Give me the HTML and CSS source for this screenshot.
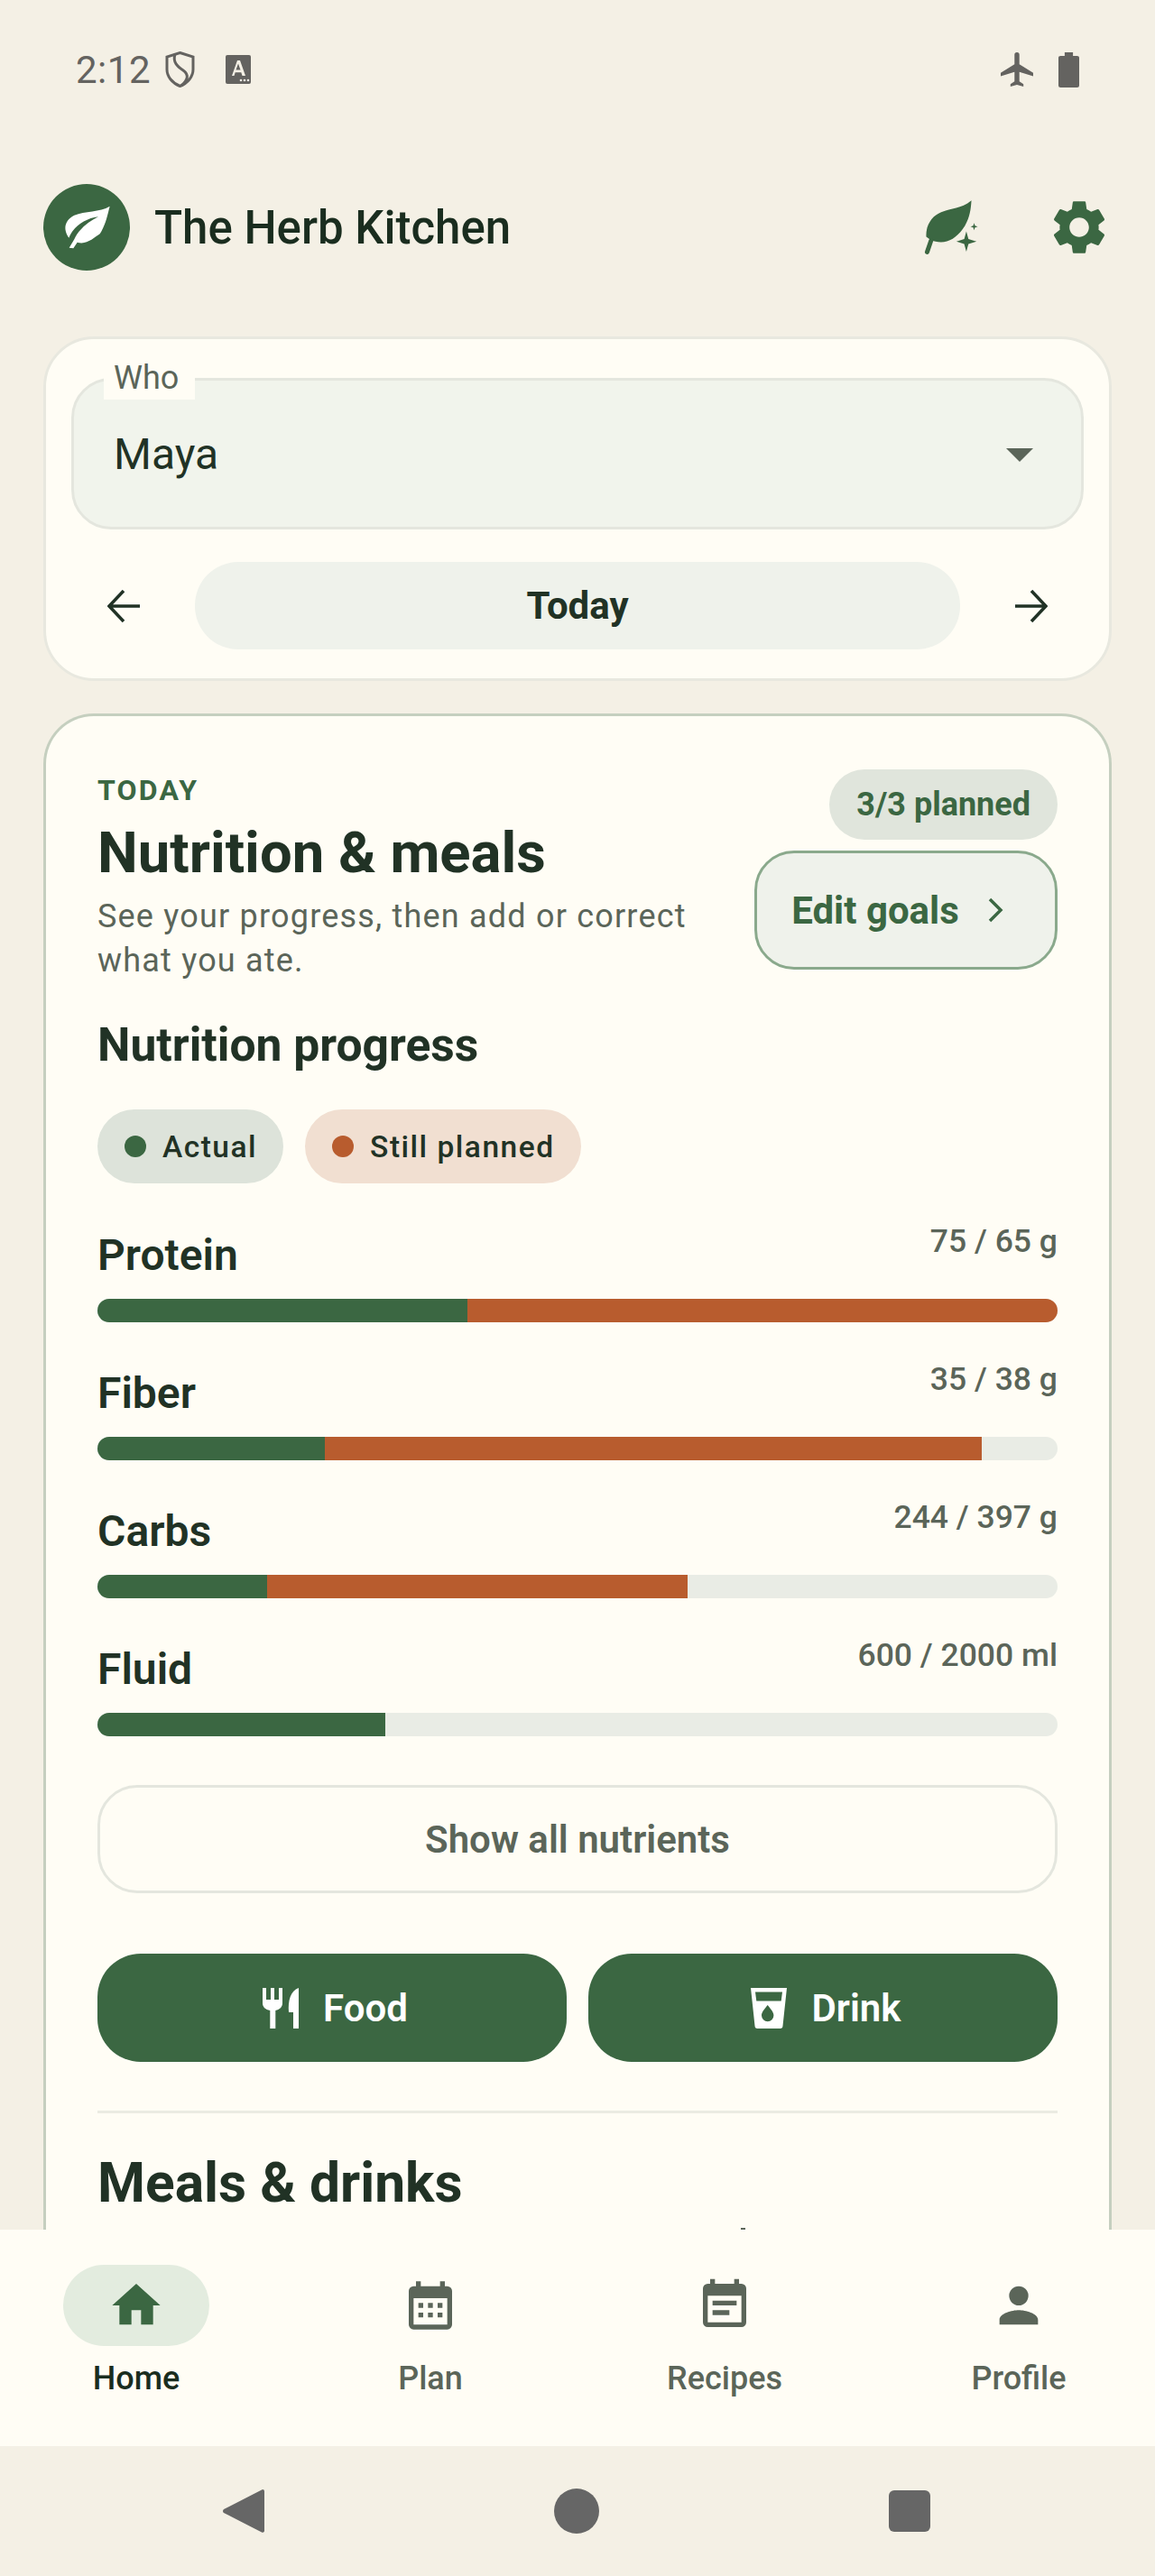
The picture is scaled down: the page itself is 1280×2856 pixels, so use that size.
FILE: index.html
```html
<!DOCTYPE html>
<html lang="en">
<head>
  <meta charset="UTF-8">
  <meta name="viewport" content="width=device-width, initial-scale=1.0">
  <title>The Herb Kitchen</title>
  <link rel="stylesheet" href="styles.css">
</head>
<body>
  <div class="screen">

    <!-- status bar -->
    <div class="status-bar">
      <div class="status-left">
        <span class="clock">2:12</span>
        <svg class="shield" viewBox="0 0 33 40" width="33" height="40"><path d="M16.500 1.500 31 6v14c0 8-6 15-14.500 18.500C8 35 2 28 2 20V6z" fill="none" stroke="#646360" stroke-width="3"/><path d="M11 3c-3 9 3 14 9 18 7 5 5 11-2 17" fill="none" stroke="#646360" stroke-width="3"/></svg>
        <svg class="keyboard" viewBox="0 0 28 32" width="28" height="32"><rect width="28" height="32" rx="2" fill="#646360"/><path d="M7 23l6-17h3l6 17h-3.500l-1.200-3.800h-6.600L9.500 23zM11.500 16.500h5L14 9.500z" fill="#f4f0e5"/><circle cx="17" cy="28" r="1.300" fill="#f4f0e5"/><circle cx="21" cy="28" r="1.300" fill="#f4f0e5"/><circle cx="25" cy="28" r="1.300" fill="#f4f0e5"/></svg>
      </div>
      <div class="status-right">
        <svg viewBox="2 2 20 20" width="36" height="38" preserveAspectRatio="none"><path d="M22 16v-2l-8.500-5V3.500a1.500 1.500 0 0 0-3 0V9L2 14v2l8.500-2.500V19l-2.500 1.500V22l4-1 4 1v-1.500L13.500 19v-5.500z" fill="#646360"/></svg>
        <svg viewBox="0 0 20 40" width="23" height="39" preserveAspectRatio="none"><path d="M6 0h8v4h4a2 2 0 0 1 2 2v32a2 2 0 0 1-2 2H2a2 2 0 0 1-2-2V6a2 2 0 0 1 2-2h4z" fill="#646360"/></svg>
      </div>
    </div>

    <!-- app bar -->
    <header class="app-bar">
      <div class="brand">
        <div class="logo">
          <svg viewBox="115 115 165 150" width="55" height="50"><path d="M273 120c-33 20-83 15-118 30-30 15-40 45-18 75 13-35 53-65 98-70-30 15-65 40-80 75l-17 28 14 2 13-20c30 10 55-15 75-28 20-32 25-62 33-92z" fill="#fff"/></svg>
        </div>
        <h1 class="brand-name">The Herb Kitchen</h1>
      </div>
      <div class="app-actions">
        <svg viewBox="70 60 180 190" width="60" height="63"><path d="M228 64c-2 30-5 55-22 85-25 40-60 62-98 52l-13-3-18-13c-2-40 20-70 50-82 35-14 65-10 101-39z" fill="#3b6742"/><path d="M93 198 80 236" stroke="#3b6742" stroke-width="15" stroke-linecap="round" fill="none"/><path d="M211 167l7 26 27 8-27 8-7 26-7-26-26-8 26-8zM237 139l3 9 9 3-9 3-3 9-3-9-9-3 9-3z" fill="#3b6742"/></svg>
        <svg viewBox="0 0 24 24" width="72" height="72"><path d="M19.140 12.940c.04-.3.060-.61.060-.94 0-.32-.020-.64-.070-.94l2.030-1.580c.18-.14.230-.41.120-.61l-1.920-3.320c-.12-.22-.37-.29-.59-.22l-2.390.96c-.5-.38-1.030-.7-1.620-.94l-.36-2.540c-.04-.24-.24-.41-.48-.41h-3.840c-.24 0-.43.170-.47.41l-.36 2.540c-.59.240-1.130.57-1.620.94l-2.390-.96c-.22-.08-.47 0-.59.220L2.740 8.870c-.12.210-.08.470.12.610l2.030 1.580c-.05.300-.09.630-.09.940s.020.640.070.940l-2.030 1.580c-.18.140-.23.410-.12.610l1.920 3.320c.12.220.37.290.59.220l2.390-.96c.5.380 1.030.7 1.620.94l.36 2.540c.05.240.24.410.48.410h3.840c.24 0 .44-.17.470-.41l.36-2.540c.59-.24 1.130-.56 1.620-.94l2.390.96c.22.080.47 0 .59-.22l1.920-3.320c.12-.22.070-.47-.12-.61zM12 15.600c-1.980 0-3.600-1.620-3.600-3.600s1.620-3.600 3.600-3.600 3.600 1.620 3.600 3.600-1.620 3.600-3.600 3.600z" fill="#3b6742"/></svg>
      </div>
    </header>

    <!-- who / day picker -->
    <section class="picker-card">
      <div class="who-field">
        <span class="who-label">Who</span>
        <span class="who-value">Maya</span>
        <span class="who-arrow"></span>
      </div>
      <div class="day-row">
        <svg viewBox="0 0 36 36" width="36" height="36"><path d="M36 18H4M18 1 2 18l16 17" fill="none" stroke="#213225" stroke-width="3.500"/></svg>
        <div class="day-pill">Today</div>
        <svg viewBox="0 0 36 36" width="36" height="36"><path d="M0 18h32M18 1l16 17-16 17" fill="none" stroke="#213225" stroke-width="3.500"/></svg>
      </div>
    </section>

    <!-- main card -->
    <section class="main-card">
      <div class="intro">
        <div class="intro-text">
          <div class="eyebrow">TODAY</div>
          <h2 class="title">Nutrition &amp; meals</h2>
          <p class="subtitle">See your progress, then add or correct what you ate.</p>
        </div>
        <div class="intro-side">
          <span class="planned-chip">3/3 planned</span>
          <button class="goals-btn">Edit goals
            <svg viewBox="0 0 17 28" width="17" height="28"><path d="M2 2l12 12L2 26" fill="none" stroke="#3b6742" stroke-width="3.500"/></svg>
          </button>
        </div>
      </div>

      <h3 class="section-title">Nutrition progress</h3>
      <div class="legend">
        <span class="legend-chip actual"><i class="dot dot-green"></i>Actual</span>
        <span class="legend-chip planned"><i class="dot dot-orange"></i>Still planned</span>
      </div>

      <div class="nutrient">
        <div class="nutrient-head"><span class="nutrient-name">Protein</span><span class="nutrient-val">75 / 65 g</span></div>
        <div class="bar"><div class="bar-a" style="width:38.5%"></div><div class="bar-b" style="width:61.5%"></div></div>
      </div>
      <div class="nutrient">
        <div class="nutrient-head"><span class="nutrient-name">Fiber</span><span class="nutrient-val">35 / 38 g</span></div>
        <div class="bar"><div class="bar-a" style="width:23.7%"></div><div class="bar-b" style="width:68.4%"></div></div>
      </div>
      <div class="nutrient">
        <div class="nutrient-head"><span class="nutrient-name">Carbs</span><span class="nutrient-val">244 / 397 g</span></div>
        <div class="bar"><div class="bar-a" style="width:17.7%"></div><div class="bar-b" style="width:43.8%"></div></div>
      </div>
      <div class="nutrient">
        <div class="nutrient-head"><span class="nutrient-name">Fluid</span><span class="nutrient-val">600 / 2000 ml</span></div>
        <div class="bar"><div class="bar-a" style="width:30%"></div></div>
      </div>

      <button class="show-all">Show all nutrients</button>

      <div class="add-row">
        <button class="add-btn">
          <svg viewBox="0 0 40 45" width="40" height="45"><path d="M0 0h4v13h5V0h4v13h5V0h4v17c0 4-3 7-7.700 8v20H8.300V25C3 24 0 21 0 17zM40 0v45h-6V27h-5C28 14 31 3 40 0z" fill="#fff"/></svg>
          Food
        </button>
        <button class="add-btn">
          <svg viewBox="0 0 40 45" width="40" height="45"><path fill-rule="evenodd" d="M0 0h40l-4.500 42a3 3 0 0 1-3 3h-25a3 3 0 0 1-3-3zM5 4.500l1.300 10h27.400L35 4.500zM18.700 19c-4 5-6.700 8-6.700 11.500a6.700 6.700 0 0 0 13.400 0c0-3.500-2.700-6.500-6.700-11.500z" fill="#fff"/></svg>
          Drink
        </button>
      </div>

      <hr class="divider">
      <h2 class="title meals-title">Meals &amp; drinks</h2>
      <span class="peek"></span>
    </section>

    <!-- bottom nav -->
    <nav class="bottom-nav">
      <div class="nav-item active">
        <div class="nav-icon">
          <svg viewBox="0 0 24 24" width="64" height="64"><path d="M10 20v-6h4v6h5v-8h3L12 3 2 12h3v8z" fill="#3b6742"/></svg>
        </div>
        <span>Home</span>
      </div>
      <div class="nav-item">
        <div class="nav-icon">
          <svg viewBox="0 0 24 24" width="64" height="64"><path d="M9 11H7v2h2zm4 0h-2v2h2zm4 0h-2v2h2zm2-7h-1V2h-2v2H8V2H6v2H5a2 2 0 0 0-2 2v14a2 2 0 0 0 2 2h14a2 2 0 0 0 2-2V6a2 2 0 0 0-2-2zm0 16H5V9h14zM9 15H7v2h2zm4 0h-2v2h2zm4 0h-2v2h2z" fill="#5b6559"/></svg>
        </div>
        <span>Plan</span>
      </div>
      <div class="nav-item">
        <div class="nav-icon">
          <svg viewBox="0 0 24 24" width="64" height="64"><path d="M17 10H7v2h10zm2-7h-1V1h-2v2H8V1H6v2H5a2 2 0 0 0-2 2v14a2 2 0 0 0 2 2h14a2 2 0 0 0 2-2V5a2 2 0 0 0-2-2zm0 16H5V8h14zm-5-5H7v2h7z" fill="#5b6559"/></svg>
        </div>
        <span>Recipes</span>
      </div>
      <div class="nav-item">
        <div class="nav-icon">
          <svg viewBox="0 0 24 24" width="64" height="64"><path d="M12 12a4 4 0 1 0 0-8 4 4 0 0 0 0 8zm0 2c-2.700 0-8 1.300-8 4v2h16v-2c0-2.700-5.300-4-8-4z" fill="#5b6559"/></svg>
        </div>
        <span>Profile</span>
      </div>
    </nav>

    <!-- system nav -->
    <div class="system-nav">
      <svg viewBox="2 0 46 50" width="46" height="50"><path d="M46 1a2 2 0 0 1 2 2v44a2 2 0 0 1-3 1.500L3 27a2.500 2.500 0 0 1 0-4L45 1.500z" fill="#666"/></svg>
      <svg viewBox="0 0 50 50" width="50" height="50"><circle cx="25" cy="25" r="25" fill="#666"/></svg>
      <svg viewBox="0 0 46 46" width="46" height="46"><rect width="46" height="46" rx="6" fill="#666"/></svg>
    </div>
  </div>
</body>
</html>
```

FILE: styles.css
```css
* {
  box-sizing: border-box;
}
body {
  margin: 0;
  background-color: #f4f0e5;
  font-family: Roboto, "Liberation Sans", sans-serif;
  color: #213225;
}
.screen {
  width: 1280px;
  height: 2856px;
  display: flex;
  flex-direction: column;
  overflow: hidden;
}

/* status bar */
.status-bar {
  height: 152px;
  flex: none;
  padding: 2px 84px 0 84px;
  display: flex;
  justify-content: space-between;
  align-items: center;
}
.status-left, .status-right {
  display: flex;
  align-items: center;
}
.clock {
  font-size: 42px;
  color: #646360;
  letter-spacing: 0.5px;
}
.shield {
  margin-left: 16px;
}
.keyboard {
  margin-left: 34px;
}
.status-right {
  gap: 28px;
}

/* app bar */
.app-bar {
  height: 200px;
  flex: none;
  padding: 0 48px;
  display: flex;
  justify-content: space-between;
  align-items: center;
}
.brand {
  display: flex;
  align-items: center;
  gap: 27px;
}
.logo {
  width: 96px;
  height: 96px;
  border-radius: 50%;
  background: #3b6742;
  display: flex;
  align-items: center;
  justify-content: center;
}
.brand-name {
  margin: 0;
  font-size: 51px;
  font-weight: 500;
  color: #1a2d1f;
}
.app-actions {
  display: flex;
  align-items: center;
  gap: 76px;
}

/* who / day picker */
.picker-card {
  flex: none;
  margin: 21px 48px 0;
  height: 382px;
  padding: 43px 28px 0;
  background: #fffdf5;
  border: 3px solid #e8e8df;
  border-radius: 56px;
}
.who-field {
  position: relative;
  height: 168px;
  background: #f1f4ec;
  border: 3px solid #e4e6de;
  border-radius: 44px;
  padding: 0 44px;
  display: flex;
  align-items: center;
}
.who-label {
  position: absolute;
  left: 33px;
  top: -27px;
  width: 101px;
  height: 48px;
  padding-left: 11px;
  background: #fffdf5;
  font-size: 36px;
  line-height: 48px;
  color: #5b6559;
}
.who-value {
  font-size: 48px;
  color: #213225;
}
.who-arrow {
  position: absolute;
  right: 53px;
  top: 75px;
  border-left: 15px solid transparent;
  border-right: 15px solid transparent;
  border-top: 15px solid #5b6559;
}
.day-row {
  margin-top: 36px;
  display: flex;
  align-items: center;
  justify-content: space-between;
  padding: 0 40px;
}
.day-pill {
  width: 848px;
  height: 97px;
  border-radius: 48px;
  background: #eff2eb;
  font-size: 42px;
  font-weight: 700;
  display: flex;
  align-items: center;
  justify-content: center;
}

/* main card */
.main-card {
  position: relative;
  flex: 1;
  min-height: 0;
  margin: 36px 48px 0;
  padding: 59px 57px 0;
  background: #fffdf5;
  border: 3px solid #c5cfbf;
  border-bottom: none;
  border-radius: 56px 56px 0 0;
}
.intro {
  display: flex;
  justify-content: space-between;
}
.intro-text {
  width: 680px;
  padding-top: 4px;
}
.eyebrow {
  font-size: 32px;
  line-height: 38px;
  font-weight: 700;
  letter-spacing: 2.2px;
  color: #3b6742;
}
.title {
  margin: 14px 0 0;
  font-size: 63.4px;
  line-height: 72px;
  font-weight: 700;
  color: #213225;
}
.subtitle {
  margin: 11px 0 0;
  font-size: 36px;
  line-height: 49px;
  letter-spacing: 1.2px;
  color: #5b6559;
}
.intro-side {
  display: flex;
  flex-direction: column;
  align-items: flex-end;
  gap: 12px;
}
.planned-chip {
  height: 78px;
  padding: 0 30px;
  border-radius: 39px;
  background: #e0e5dc;
  color: #3b6742;
  font-size: 36px;
  font-weight: 700;
  display: flex;
  align-items: center;
}
.goals-btn {
  width: 336px;
  height: 132px;
  padding: 0 19px 0 0;
  border-radius: 44px;
  border: 3px solid #8aa98c;
  background: #eff2eb;
  color: #3b6742;
  font-family: inherit;
  font-size: 42px;
  font-weight: 700;
  display: flex;
  align-items: center;
  justify-content: center;
  gap: 32px;
}
.section-title {
  margin: 39px 0 0;
  font-size: 51.6px;
  line-height: 60px;
  font-weight: 700;
}
.legend {
  margin-top: 41px;
  display: flex;
  gap: 24px;
}
.legend-chip {
  height: 82px;
  padding: 0 29px 0 30px;
  border-radius: 41px;
  font-size: 33.5px;
  font-weight: 500;
  letter-spacing: 1.5px;
  display: flex;
  align-items: center;
  gap: 18px;
}
.legend-chip.actual {
  background: #dde3da;
}
.legend-chip.planned {
  background: #f1dfd1;
}
.dot {
  width: 24px;
  height: 24px;
  border-radius: 50%;
}
.dot-green {
  background: #3b6742;
}
.dot-orange {
  background: #b85c2e;
}
.nutrient {
  margin-top: 33px;
}
.legend + .nutrient {
  margin-top: 34px;
}
.nutrient-head {
  display: flex;
  justify-content: space-between;
  align-items: flex-start;
  height: 94px;
}
.nutrient-name {
  font-size: 48px;
  line-height: 58px;
  font-weight: 600;
  margin-top: 17px;
}
.nutrient-val {
  font-size: 35.5px;
  line-height: 44px;
  font-weight: 500;
  margin-top: 8px;
  color: #5b6559;
}
.bar {
  height: 26px;
  border-radius: 13px;
  background: #e9ece5;
  overflow: hidden;
  display: flex;
}
.bar-a {
  background: #3b6742;
}
.bar-b {
  background: #b85c2e;
}
.show-all {
  margin-top: 54px;
  width: 100%;
  height: 120px;
  border-radius: 44px;
  border: 3px solid #e4e6de;
  background: #fffdf5;
  color: #5b6559;
  font-family: inherit;
  font-size: 42px;
  font-weight: 600;
}
.add-row {
  margin-top: 67px;
  display: flex;
  gap: 24px;
}
.add-btn {
  flex: 1;
  height: 120px;
  padding: 0 0 0 7px;
  border: none;
  border-radius: 48px;
  background: #3b6742;
  color: #fff;
  font-family: inherit;
  font-size: 42px;
  font-weight: 600;
  display: flex;
  align-items: center;
  justify-content: center;
  gap: 27px;
}
.divider {
  margin: 54px 0 0;
  border: none;
  height: 3px;
  background: #ebebe2;
}
.meals-title {
  margin-top: 42px;
  font-size: 60.5px;
}
.peek {
  position: absolute;
  left: 770px;
  bottom: 0;
  width: 5px;
  height: 2px;
  background: #5b6559;
}

/* bottom nav */
.bottom-nav {
  height: 240px;
  flex: none;
  background: #fffdf5;
  display: flex;
  padding: 39px 0 0;
}
.nav-item {
  flex: none;
  width: 326px;
  display: flex;
  flex-direction: column;
  align-items: center;
  color: #5b6559;
  font-size: 36px;
  font-weight: 500;
}
.nav-item:first-child {
  margin-left: -12px;
}
.nav-icon {
  width: 162px;
  height: 90px;
  border-radius: 45px;
  display: flex;
  align-items: center;
  justify-content: center;
  margin-bottom: 15px;
}
.nav-item.active {
  color: #1a2d1f;
}
.nav-item.active .nav-icon {
  background: #e3ecdf;
}

/* system nav */
.system-nav {
  height: 144px;
  flex: none;
  display: flex;
  align-items: center;
  justify-content: center;
  gap: 321px;
  padding-right: 2px;
}
```
